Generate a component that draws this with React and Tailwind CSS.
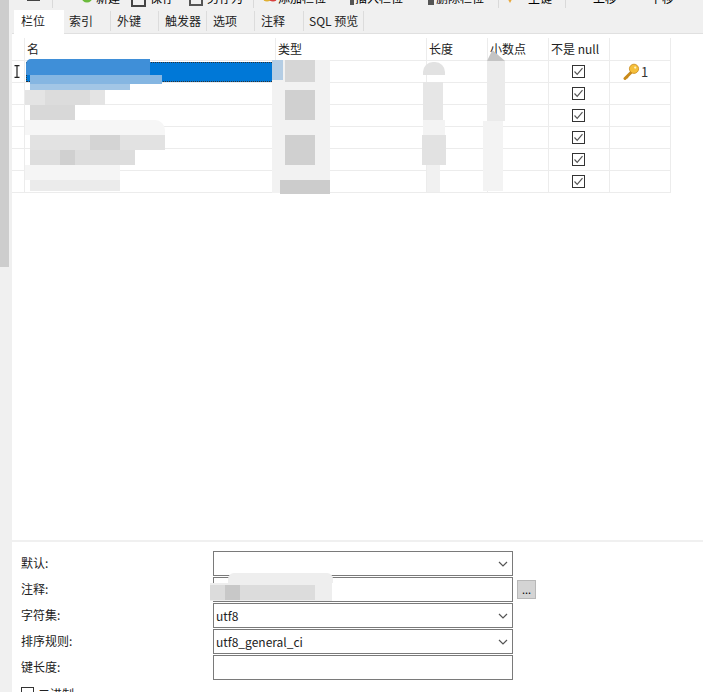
const FONT = 'font-["Noto_Sans_CJK_SC","Liberation_Sans",sans-serif]';

function ToolIcon({ className, children }) {
  return (
    <svg className={className} width="16" height="16" viewBox="0 0 16 16">
      {children}
    </svg>
  );
}

function Toolbar() {
  return (
    <div className="h-[8px] overflow-hidden bg-[#f0f0f0]">
      <div className="flex h-[4px] items-end text-[12px] leading-[12px] text-black">
        <div className="ml-[15px] h-[1px] w-[13px] bg-[#444] self-start" />
        <div className="ml-[12px] h-[8px] w-[1px] bg-[#d9d9d9] self-start" />
        <ToolIcon className="ml-[26px] shrink-0">
          <circle cx="8" cy="9" r="5.5" fill="#6cbb3c" />
        </ToolIcon>
        <span className="ml-[1px] w-[28px]">新建</span>
        <div className="ml-[7px] h-[7px] w-[15px] shrink-0 self-start border-x-2 border-b-2 border-[#444]" />
        <span className="ml-[4px] w-[26px]">保存</span>
        <div className="ml-[13px] h-[6px] w-[14px] shrink-0 self-start border-x-2 border-b-2 border-[#555]" />
        <span className="ml-[4px] w-[38px]">另存为</span>
        <div className="ml-[8px] h-[8px] w-[1px] bg-[#d9d9d9] self-start" />
        <ToolIcon className="ml-[8px] shrink-0">
          <circle cx="5" cy="9" r="4.5" fill="#e0b030" />
          <circle cx="11" cy="9" r="4.5" fill="#d8403f" />
        </ToolIcon>
        <span className="w-[58px]">添加栏位</span>
        <div className="ml-[14px] h-[5px] w-[4px] shrink-0 self-start bg-[#555]" />
        <span className="ml-[1px] w-[68px]">插入栏位</span>
        <div className="ml-[5px] h-[5px] w-[6px] shrink-0 self-start bg-[#555]" />
        <span className="ml-[2px] w-[60px]">删除栏位</span>
        <div className="ml-[2px] h-[8px] w-[1px] bg-[#d9d9d9] self-start" />
        <ToolIcon className="ml-[3px] shrink-0">
          <path d="M2 4h12l-6 11z" fill="#e8a83c" />
        </ToolIcon>
        <span className="ml-[10px] w-[37px]">主键</span>
        <div className="h-[8px] w-[1px] bg-[#d9d9d9] self-start" />
        <span className="ml-[27px] w-[57px]">上移</span>
        <span className="w-[30px]">下移</span>
      </div>
    </div>
  );
}

const TABS = ['索引', '外键', '触发器', '选项', '注释', 'SQL 预览'];

function Tabs() {
  return (
    <div className="flex h-[26px] border-b border-[#e0e0e0] bg-[#f0f0f0] pl-[2px] text-[12px] text-[#222]">
      <div className="mt-[2px] h-[24px] w-[50px] bg-white pl-[7px] leading-[21px]">栏位</div>
      {TABS.map((t, i) => (
        <div
          key={t}
          className={`mt-[3px] flex h-[20px] items-center border-r border-[#dcdcdc] ${i === 0 ? 'w-[47px] pl-[5px]' : i === 4 ? 'w-[49px] pl-[6px]' : i === 5 ? 'w-[60px] pl-[5px]' : 'w-[48px] pl-[6px]'}`}
        >
          {t}
        </div>
      ))}
    </div>
  );
}

const COLS = 'grid grid-cols-[13px_251px_151px_61px_61px_61px_61px]';

function KeyIcon() {
  return (
    <svg width="17" height="17" viewBox="0 0 17 17" className="shrink-0">
      <path d="M2 15.5 L9 8.5" stroke="#c98a1a" strokeWidth="3" strokeLinecap="round" />
      <path d="M3 13.5 l2 1.5" stroke="#c98a1a" strokeWidth="1.5" />
      <circle cx="11" cy="5.8" r="4.6" fill="#f5bf3a" stroke="#c98a1a" strokeWidth="0.8" />
      <circle cx="12.2" cy="4.6" r="1.1" fill="#fff3c0" />
    </svg>
  );
}

function Check() {
  return (
    <svg width="13" height="13" viewBox="0 0 13 13">
      <rect x="0.5" y="0.5" width="12" height="12" fill="#fff" stroke="#333" />
      <path d="M2.5 6.5 L5.2 9.3 L10.5 3.2" fill="none" stroke="#555" strokeWidth="1.2" />
    </svg>
  );
}

function Cell({ className = '', children }) {
  return <div className={`h-[22px] border-r border-b border-[#ececec] ${className}`}>{children}</div>;
}

function FieldTable() {
  const heads = ['名', '类型', '长度', '小数点', '不是 null', ''];
  return (
    <div className="mt-[4px] w-[659px] text-[12px] text-[#222]">
      <div className={COLS}>
        <div className="h-[23px] border-b border-r border-[#ececec]" />
        {heads.map((h, i) => (
          <div key={i} className="flex h-[23px] items-center border-r border-b border-[#ececec] pl-[2px]">
            {h}
          </div>
        ))}
      </div>
      {[0, 1, 2, 3, 4, 5].map((r) => (
        <div key={r} className={COLS}>
          <Cell className="flex items-center justify-center">
            {r === 0 && (
              <svg width="6" height="13" viewBox="0 0 6 13" className="mr-[3px]">
                <path d="M0.5 0.7h5M0.5 12.3h5M3 1v11" stroke="#222" strokeWidth="1.2" fill="none" />
              </svg>
            )}
          </Cell>
          <Cell className="p-[1px]">
            {r === 0 && <div className="h-[20px] w-[248px] border border-dotted border-[#333] bg-[#0078d7]" />}
          </Cell>
          <Cell />
          <Cell />
          <Cell />
          <Cell className="flex items-center justify-center pr-[1px]">
            <Check />
          </Cell>
          <Cell className="flex items-center pl-[13px] text-[13px] text-[#333]">
            {r === 0 && (
              <>
                <KeyIcon />
                <span className="ml-[1px]">1</span>
              </>
            )}
          </Cell>
        </div>
      ))}
    </div>
  );
}

function Chevron() {
  return (
    <svg width="10" height="6" viewBox="0 0 10 6" className="absolute right-[4px] top-[9px]">
      <path d="M1 1 L5 5 L9 1" fill="none" stroke="#555" strokeWidth="1.2" />
    </svg>
  );
}

function Field({ label, value, select, extra }) {
  return (
    <div className="flex h-[26px] items-center text-[12px] text-[#222]">
      <div className="w-[193px] pl-[1px]">{label}</div>
      <div className="relative h-[25px] w-[300px] border border-[#7a7a7a] bg-white pl-[2px] leading-[23px]">
        {value}
        {select && <Chevron />}
      </div>
      {extra}
    </div>
  );
}

function Props() {
  return (
    <div className="border-t-[2px] border-[#f0f0f0] pl-[8px] pt-[8px]">
      <Field label="默认:" select />
      <Field
        label="注释:"
        extra={
          <div className="ml-[4px] flex h-[19px] w-[19px] items-center justify-center border border-[#b8b8b8] bg-[#d4d4d4] text-[11px] leading-none text-black">
            ...
          </div>
        }
      />
      <Field label="字符集:" value="utf8" select />
      <Field label="排序规则:" value="utf8_general_ci" select />
      <Field label="键长度:" />
      <div className="mt-[7px] flex items-start text-[12px] leading-[14px] text-[#222]">
        <div className="ml-[1px] h-[13px] w-[13px] border border-[#333]" />
        <span className="ml-[4px]">二进制</span>
      </div>
    </div>
  );
}

// mosaic that hides the field values in the screenshot
function Masks() {
  return (
    <div className="pointer-events-none absolute inset-0 blur-[0.6px]">
      <div className="absolute left-[26px] top-[59px] h-[16px] w-[124px] rounded-tl-[5px] bg-[#3f8fd8]" />
      <div className="absolute left-[30px] top-[75px] h-[9px] w-[132px] bg-[#85b6e2]" />
      <div className="absolute left-[30px] top-[84px] h-[6px] w-[100px] bg-[#a2c6e6]" />
      <div className="absolute left-[25px] top-[90px] h-[15px] w-[80px] bg-[#e4e4e4]" />
      <div className="absolute left-[45px] top-[90px] h-[15px] w-[45px] bg-[#dcdcdc]" />
      <div className="absolute left-[30px] top-[105px] h-[15px] w-[45px] bg-[#d8d8d8]" />
      <div className="absolute left-[25px] top-[120px] h-[15px] w-[140px] rounded-tr-[10px] bg-[#f6f6f6]" />
      <div className="absolute left-[30px] top-[135px] h-[15px] w-[135px] bg-[#e2e2e2]" />
      <div className="absolute left-[90px] top-[135px] h-[30px] w-[30px] bg-[#d4d4d4]" />
      <div className="absolute left-[30px] top-[150px] h-[15px] w-[105px] bg-[#dddddd]" />
      <div className="absolute left-[60px] top-[150px] h-[15px] w-[15px] bg-[#d0d0d0]" />
      <div className="absolute left-[25px] top-[165px] h-[15px] w-[95px] bg-[#f5f5f5]" />
      <div className="absolute left-[30px] top-[180px] h-[11px] w-[90px] bg-[#ebebeb]" />

      <div className="absolute left-[272px] top-[60px] h-[133px] w-[58px] bg-[#f2f2f2]" />
      <div className="absolute left-[272px] top-[60px] h-[20px] w-[11px] bg-[#b4cde4]" />
      <div className="absolute left-[285px] top-[60px] h-[22px] w-[30px] bg-[#d6d6d6]" />
      <div className="absolute left-[285px] top-[90px] h-[30px] w-[30px] bg-[#d0d0d0]" />
      <div className="absolute left-[285px] top-[135px] h-[30px] w-[30px] bg-[#d0d0d0]" />
      <div className="absolute left-[280px] top-[180px] h-[14px] w-[50px] bg-[#cccccc]" />

      <div className="absolute left-[423px] top-[62px] h-[13px] w-[22px] rounded-t-[10px] bg-[#e2e2e2]" />
      <div className="absolute left-[423px] top-[82px] h-[38px] w-[20px] bg-[#e6e6e6]" />
      <div className="absolute left-[423px] top-[120px] h-[15px] w-[22px] bg-[#f3f3f3]" />
      <div className="absolute left-[422px] top-[135px] h-[30px] w-[24px] bg-[#e2e2e2]" />
      <div className="absolute left-[427px] top-[165px] h-[27px] w-[13px] bg-[#f1f1f1]" />

      <div className="absolute left-[487px] top-[50px] h-[11px] w-[18px] bg-[#c4c4c4] [clip-path:polygon(30%_0,100%_100%,0_100%)]" />
      <div className="absolute left-[487px] top-[61px] h-[60px] w-[18px] bg-[#ebebeb]" />
      <div className="absolute left-[483px] top-[121px] h-[70px] w-[20px] bg-[#f3f3f3]" />

      <div className="absolute left-[228px] top-[573px] h-[10px] w-[105px] rounded-t-[6px] bg-[#eeeeee]" />
      <div className="absolute left-[210px] top-[583px] h-[18px] w-[122px] bg-[#eeeeee]" />
      <div className="absolute left-[210px] top-[585px] h-[15px] w-[105px] bg-[#dcdcdc]" />
      <div className="absolute left-[225px] top-[585px] h-[15px] w-[15px] bg-[#c8c8c8]" />
    </div>
  );
}

export default function App() {
  return (
    <div className={`relative flex h-[692px] w-[703px] overflow-hidden bg-white ${FONT}`}>
      <div className="w-[12px] shrink-0 bg-[#f0f0f0]">
        <div className="h-[267px] w-[9px] bg-[#cdcdcd]" />
      </div>
      <div className="flex min-w-0 flex-1 flex-col">
        <Toolbar />
        <Tabs />
        <FieldTable />
        <div className="flex-1" />
        <div className="h-[152px]">
          <Props />
        </div>
      </div>
      <Masks />
    </div>
  );
}
